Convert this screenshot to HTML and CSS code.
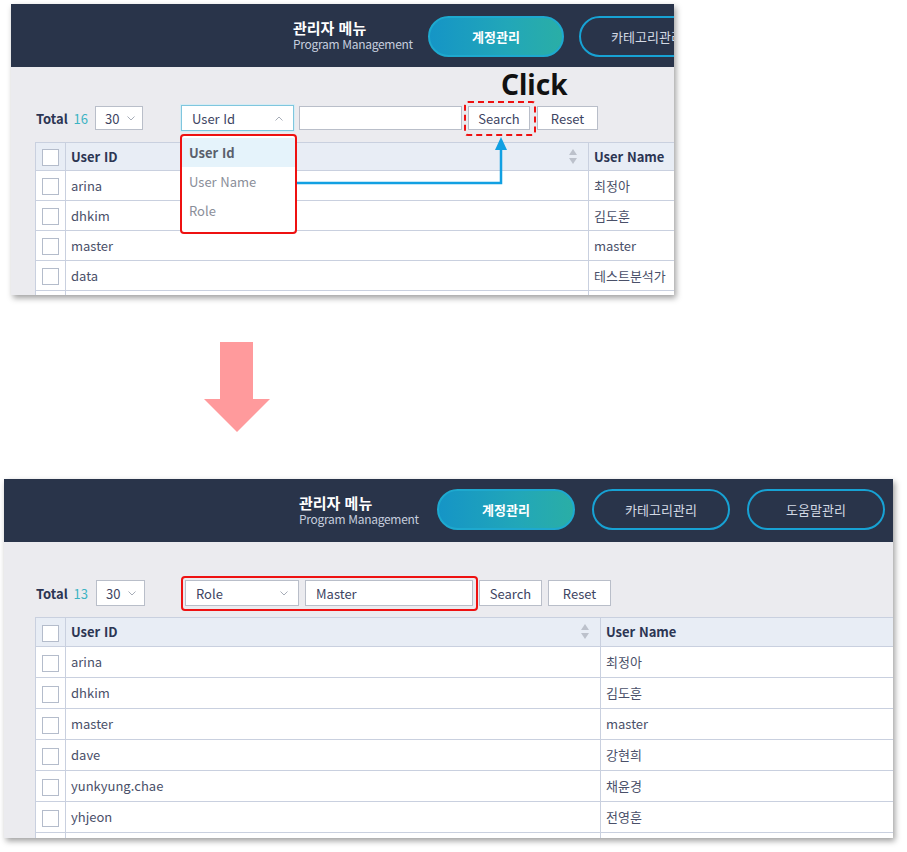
FILE: index.html
```html
<!DOCTYPE html>
<html lang="ko">
<head>
<meta charset="utf-8">
<title>관리자 메뉴</title>
<link rel="stylesheet" href="styles.css">
</head>
<body>
<div class="page">

  <!-- top panel -->
  <section class="panel panel-top">
    <header class="bar">
      <div class="brand">
        <div class="brand-title">관리자 메뉴</div>
        <div class="brand-sub">Program Management</div>
      </div>
      <nav class="menu">
        <span class="pill pill-active">계정관리</span>
        <span class="pill">카테고리관리</span>
      </nav>
    </header>
    <div class="content">
      <div class="toolbar">
        <div class="total">Total <span class="count">16</span></div>
        <div class="box select-size">30 <svg class="chev" viewBox="0 0 8 5"><path d="M0.5 0.5 L4 4 L7.5 0.5"/></svg></div>
        <div class="box select-field focused">User Id <svg class="chev" viewBox="0 0 8 5"><path d="M0.5 4.5 L4 1 L7.5 4.5"/></svg></div>
        <div class="box text-input"></div>
        <div class="box btn btn-search">Search</div>
        <div class="box btn btn-reset">Reset</div>
      </div>
      <table class="grid">
        <colgroup><col class="c-chk"><col class="c-id"><col class="c-name"></colgroup>
        <thead>
          <tr><th><span class="chk"></span></th><th class="th-id">User ID<span class="sort"><i class="up"></i><i class="down"></i></span></th><th>User Name</th></tr>
        </thead>
        <tbody>
          <tr><td><span class="chk"></span></td><td>arina</td><td>최정아</td></tr>
          <tr><td><span class="chk"></span></td><td>dhkim</td><td>김도훈</td></tr>
          <tr><td><span class="chk"></span></td><td>master</td><td>master</td></tr>
          <tr><td><span class="chk"></span></td><td>data</td><td>테스트분석가</td></tr>
          <tr><td><span class="chk"></span></td><td>&nbsp;</td><td>&nbsp;</td></tr>
        </tbody>
      </table>
    </div>
  </section>

  <div class="down-arrow">
    <svg viewBox="0 0 66 90" width="66" height="90"><polygon points="16,0 49,0 49,57 66,57 33,90 0,57 16,57"/></svg>
  </div>

  <!-- bottom panel -->
  <section class="panel panel-bottom">
    <header class="bar">
      <div class="brand">
        <div class="brand-title">관리자 메뉴</div>
        <div class="brand-sub">Program Management</div>
      </div>
      <nav class="menu">
        <span class="pill pill-active">계정관리</span>
        <span class="pill">카테고리관리</span>
        <span class="pill">도움말관리</span>
      </nav>
    </header>
    <div class="content">
      <div class="toolbar">
        <div class="total">Total <span class="count">13</span></div>
        <div class="box select-size">30 <svg class="chev" viewBox="0 0 8 5"><path d="M0.5 0.5 L4 4 L7.5 0.5"/></svg></div>
        <div class="box select-field">Role <svg class="chev" viewBox="0 0 8 5"><path d="M0.5 0.5 L4 4 L7.5 0.5"/></svg></div>
        <div class="box text-input">Master</div>
        <div class="box btn btn-search">Search</div>
        <div class="box btn btn-reset">Reset</div>
      </div>
      <table class="grid">
        <colgroup><col class="c-chk"><col class="c-id"><col class="c-name"></colgroup>
        <thead>
          <tr><th><span class="chk"></span></th><th class="th-id">User ID<span class="sort"><i class="up"></i><i class="down"></i></span></th><th>User Name</th></tr>
        </thead>
        <tbody>
          <tr><td><span class="chk"></span></td><td>arina</td><td>최정아</td></tr>
          <tr><td><span class="chk"></span></td><td>dhkim</td><td>김도훈</td></tr>
          <tr><td><span class="chk"></span></td><td>master</td><td>master</td></tr>
          <tr><td><span class="chk"></span></td><td>dave</td><td>강현희</td></tr>
          <tr><td><span class="chk"></span></td><td>yunkyung.chae</td><td>채윤경</td></tr>
          <tr><td><span class="chk"></span></td><td>yhjeon</td><td>전영훈</td></tr>
          <tr><td><span class="chk"></span></td><td>&nbsp;</td><td>&nbsp;</td></tr>
        </tbody>
      </table>
    </div>
  </section>

  <!-- annotations -->
  <div class="click-label">Click</div>
  <div class="dashed-mark"></div>
  <svg class="link-arrow" viewBox="0 0 220 60" width="220" height="60">
    <path d="M6 53 H211 V19" fill="none" stroke="#11a0e2" stroke-width="2.5"/>
    <polygon points="205,20 217,20 211,7" fill="#11a0e2"/>
  </svg>
  <ul class="dropdown">
    <li class="opt opt-on">User Id</li>
    <li class="opt">User Name</li>
    <li class="opt">Role</li>
  </ul>
  <div class="solid-mark"></div>
</div>
</body>
</html>
```

FILE: styles.css
```css
* { box-sizing: border-box; }

html, body {
  margin: 0;
  padding: 0;
  background: #ffffff;
}

body {
  font-family: "Noto Sans CJK KR", "Noto Sans", sans-serif;
  color: #3d4462;
  width: 907px;
  height: 852px;
  overflow: hidden;
}

.page {
  position: relative;
  padding-top: 4px;
  width: 907px;
  height: 852px;
}

/* ---------- panels ---------- */
.panel {
  background: #ebebef;
  overflow: hidden;
  box-shadow: 2px 3px 6px rgba(0, 0, 0, 0.38);
}

.panel-top {
  margin-left: 11px;
  width: 663px;
  height: 291px;
}

.panel-bottom {
  margin-top: 47px;
  margin-left: 4px;
  width: 889px;
  height: 359px;
}

.bar {
  height: 63px;
  background: #29344a;
  display: flex;
  align-items: flex-start;
  white-space: nowrap;
}

.panel-top .bar { padding-left: 282px; }
.panel-bottom .bar { padding-left: 295px; }

.brand {
  padding-top: 15px;
  line-height: 1;
  flex-shrink: 0;
}

.panel-top .brand { width: 135px; }
.panel-bottom .brand { width: 138px; }

.brand-title {
  color: #ffffff;
  font-weight: 700;
  font-size: 15px;
  line-height: 18px;
}

.brand-sub {
  color: #c6cede;
  font-size: 12px;
  line-height: 14px;
  letter-spacing: -0.3px;
}

.menu {
  display: flex;
  flex-shrink: 0;
}

.panel-top .menu { padding-top: 12px; gap: 15px; }
.panel-bottom .menu { padding-top: 10px; gap: 17px; }

.pill {
  display: flex;
  align-items: center;
  justify-content: center;
  height: 41px;
  border-radius: 21px;
  border: 2px solid #17a2d4;
  color: #d3d9e4;
  font-size: 13px;
  flex-shrink: 0;
}

.panel-top .pill { width: 136px; }
.panel-bottom .pill { width: 138px; }

.pill-active {
  border-color: #1ea9cf;
  background: linear-gradient(90deg, #1595c6 0%, #22a7b8 60%, #2aaea6 100%);
  color: #ffffff;
  font-weight: 700;
}

/* ---------- toolbar ---------- */
.toolbar {
  display: flex;
  align-items: center;
  height: 26px;
  margin-top: 38px;
  font-size: 13px;
  white-space: nowrap;
}

.panel-top .toolbar { padding-left: 25px; }
.panel-bottom .toolbar { padding-left: 32px; }

.total {
  font-weight: 700;
  color: #2c3553;
  flex-shrink: 0;
}

.panel-top .total { width: 59px; }
.panel-bottom .total { width: 60px; }

.count {
  font-weight: 400;
  color: #3db3c3;
  margin-left: 2px;
}

.box {
  display: flex;
  align-items: center;
  height: 24px;
  background: #ffffff;
  border: 1px solid #b9bec9;
  color: #3d4462;
  font-size: 13px;
  flex-shrink: 0;
}

.panel-bottom .box { height: 26px; }

.chev {
  width: 8px;
  height: 5px;
  fill: none;
  stroke: #a7adb8;
  stroke-width: 1;
}

.select-size {
  padding-left: 9px;
  gap: 8px;
}

.panel-top .select-size { width: 48px; }
.panel-bottom .select-size { width: 49px; }

.select-field {
  justify-content: space-between;
  padding: 0 10px 0 10px;
  margin-left: 38px;
}

.panel-top .select-field { width: 113px; height: 26px; }
.panel-bottom .select-field { width: 114px; margin-left: 40px; }

.focused {
  border-color: #7fc6de;
  box-shadow: 0 0 0 1px #d6ecf4;
}

.text-input {
  padding-left: 10px;
  margin-left: 5px;
}

.panel-top .text-input { width: 163px; }
.panel-bottom .text-input { width: 168px; margin-left: 6px; }

.btn {
  justify-content: center;
  margin-left: 6px;
}

.panel-top .btn-search { width: 62px; }
.panel-top .btn-reset { width: 61px; margin-left: 7px; }
.panel-bottom .btn-search { width: 63px; }
.panel-bottom .btn-reset { width: 63px; }

/* ---------- table ---------- */
.grid {
  border-collapse: collapse;
  margin-top: 11px;
  table-layout: fixed;
  font-size: 13px;
  background: #ffffff;
}

.panel-top .grid { margin-left: 24px; width: 720px; }
.panel-bottom .grid { margin-left: 31px; width: 858px; }

.c-chk { width: 30px; }
.panel-top .c-id { width: 523px; }
.panel-top .c-name { width: 167px; }
.panel-bottom .c-id { width: 535px; }
.panel-bottom .c-name { width: 293px; }

.grid th,
.grid td {
  border: 1px solid #c9d0df;
  padding: 0 0 1px 5px;
  text-align: left;
  white-space: nowrap;
  overflow: hidden;
}

.grid th:first-child,
.grid td:first-child {
  padding: 0;
  text-align: center;
}

.grid th {
  background: #e8edf5;
  font-weight: 700;
  color: #2c3553;
}

.panel-top .grid th { height: 28px; }
.panel-top .grid td { height: 30px; }
.panel-bottom .grid th { height: 29px; }
.panel-bottom .grid td { height: 31px; }

.grid td { color: #4a5069; }

.chk {
  display: inline-block;
  width: 17px;
  height: 17px;
  background: #ffffff;
  border: 1px solid #b4bccb;
  vertical-align: middle;
}

.th-id { position: relative; }

.sort {
  position: absolute;
  right: 11px;
  top: 50%;
  margin-top: -8px;
  display: flex;
  flex-direction: column;
  gap: 3px;
}

.sort i {
  display: block;
  width: 0;
  height: 0;
  border-left: 4px solid transparent;
  border-right: 4px solid transparent;
}

.sort .up { border-bottom: 6px solid #bcc1cb; }
.sort .down { border-top: 6px solid #bcc1cb; }

/* ---------- pink arrow ---------- */
.down-arrow {
  margin-top: 47px;
  margin-left: 204px;
  height: 90px;
  width: 66px;
}

.down-arrow svg {
  display: block;
  fill: #ff9a9c;
}

/* ---------- annotations ---------- */
.click-label {
  position: absolute;
  left: 501px;
  top: 66px;
  font-family: "Noto Sans", "Open Sans", sans-serif;
  font-weight: 700;
  font-size: 28px;
  line-height: 36px;
  color: #111111;
}

.dashed-mark {
  position: absolute;
  left: 464px;
  top: 101px;
  width: 72px;
  height: 35px;
  border: 2.5px dashed #ee1111;
  border-radius: 4px;
}

.link-arrow {
  position: absolute;
  left: 290px;
  top: 130px;
}

.dropdown {
  position: absolute;
  left: 180px;
  top: 134px;
  width: 117px;
  height: 100px;
  margin: 0;
  padding: 2px 0 0 0;
  list-style: none;
  background: #ffffff;
  border: 2.5px solid #ee1111;
  border-radius: 4px;
  font-size: 13px;
}

.opt {
  height: 29px;
  line-height: 29px;
  padding-left: 7px;
  color: #8a8e99;
}

.opt-on {
  background: #e5f3fb;
  color: #5a5f6c;
  font-weight: 700;
}

.solid-mark {
  position: absolute;
  left: 181px;
  top: 576px;
  width: 297px;
  height: 35px;
  border: 2.5px solid #ee1111;
  border-radius: 4px;
}
```
